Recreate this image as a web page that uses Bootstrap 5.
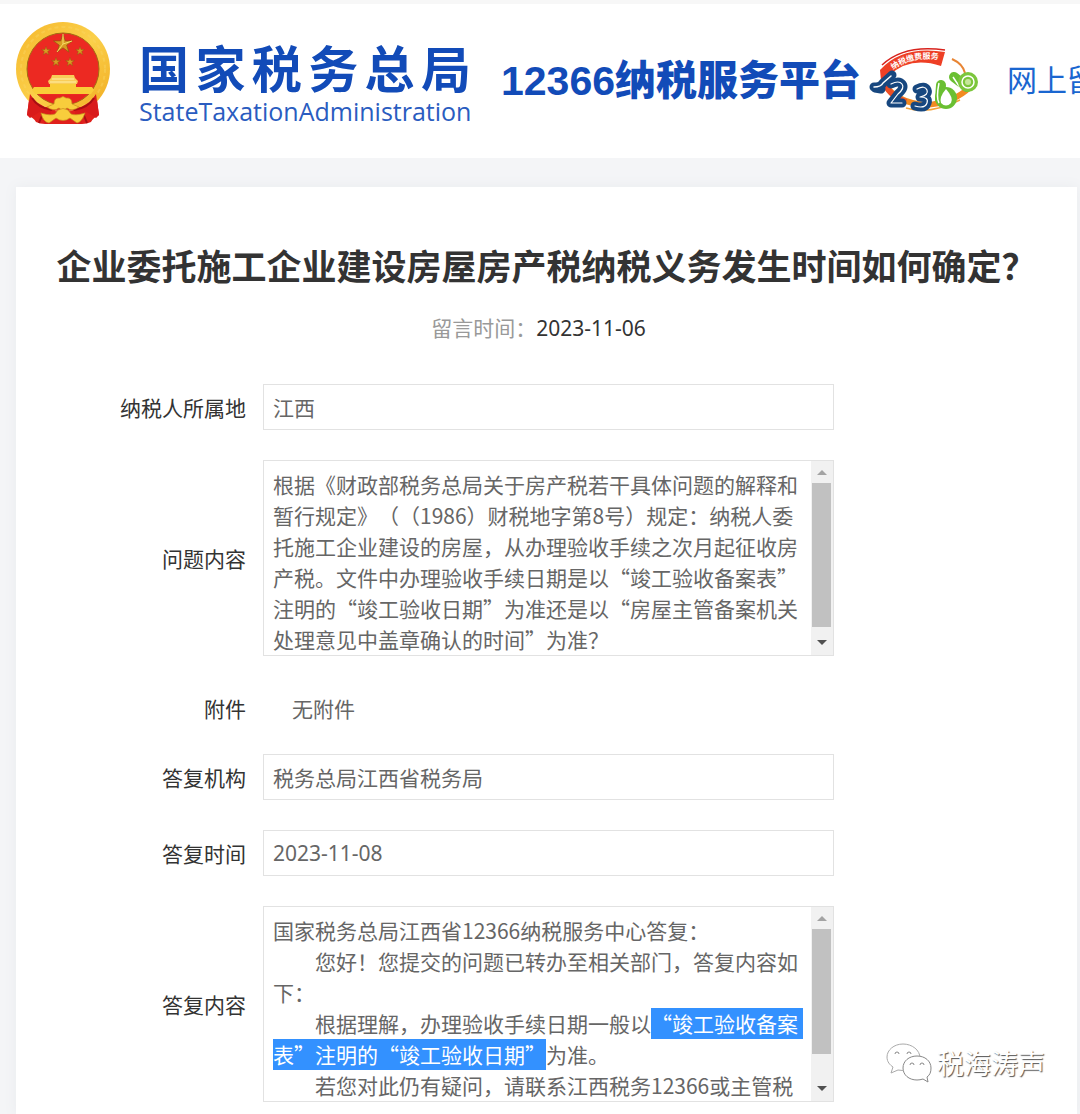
<!DOCTYPE html>
<html lang="zh-CN">
<head>
<meta charset="utf-8">
<meta name="viewport" content="width=device-width, initial-scale=1">
<title>12366纳税服务平台</title>
<link href="https://cdn.jsdelivr.net/npm/bootstrap@5.3.0/dist/css/bootstrap.min.css" rel="stylesheet">
<style>
  body {
    background: #f4f5f7;
    color: #333;
    font-family: "Noto Sans CJK SC", "Noto Sans", sans-serif;
    font-size: 21px;
    line-height: 30px;
    text-spacing-trim: space-all;
  }
  .site-header { border-top: 4px solid #f7f7f7; height: 158px; color: #124bb8; }
  .brand-emblem { margin: 18px 29px 0 16px; }
  .brand-name { width: 332px; margin-top: 31px; }
  .brand-cn { font-size: 50px; line-height: 62px; font-weight: 700; text-align-last: justify; }
  .brand-en { font-family: "Open Sans", "Noto Sans", sans-serif; font-size: 25px; line-height: 28px; color: #2a5cc0; }
  .platform { font-size: 41px; line-height: 48px; font-weight: 900; margin: 49px 0 0 30px; }
  .platform-num { font-family: "Liberation Sans", sans-serif; }
  .platform-logo { margin: 43px 0 0 7px; }
  .top-link { font-size: 30px; line-height: 40px; margin: 54px 0 0 27px; color: #1a66d0; }
  .sheet { margin: 29px 3px 0 16px; padding: 53px 16px 13px 0; box-shadow: 0 0 12px #e9ebee; }
  .sheet-title { font-size: 35px; line-height: 50px; padding-left: 16px; }
  .sheet-date { margin: 22px 0 41px; }
  .muted-label { color: #999; }
  .form-stack { gap: 30px; }
  .field-label { width: 230px; margin-right: 17px; flex: none; }
  .field-box { width: 571px; min-width: 0; }
  .field-box, .field-box .form-control { color: #666; }
  .field-box .form-control { font: inherit; border-radius: 0; border: 1px solid #e2e2e2; padding: 7px 9px; background: #fff; box-shadow: none; }
  .area-frame { border: 1px solid #e2e2e2; height: 196px; }
  .area-frame .form-control { border: 0; padding: 8px 0 0 9px; resize: none; overflow: hidden; height: 194px; line-height: 31px; }
  .latin, .field-box .latin { font-family: "Noto Sans", "Noto Sans CJK SC", sans-serif; }
  .form-control::selection { background: #3391ff; color: #fff; }
  .scroll-track { width: 22px; background: #f1f1f1; flex: none; }
  .scroll-thumb { width: 19px; background: #c1c1c1; margin-left: 1px; }
  .thumb-long { height: 144px; }
  .thumb-short { height: 125px; }
  .no-file { padding: 7px 0 1px 29px; }
  .no-file-label { padding-top: 7px; }
  .stamp { right: 32px; bottom: 30px; color: #fff; font-size: 27px; line-height: 44px; text-shadow: 1px 1px 1px #555; gap: 5px; }
</style>
</head>
<body class="d-flex flex-column min-vh-100 overflow-hidden">

<header class="site-header bg-white d-flex align-items-start text-nowrap overflow-hidden">
  <svg class="brand-emblem flex-shrink-0" width="94" height="103" viewBox="0 0 94 103" role="img" aria-label="国徽">
    <defs>
      <linearGradient id="gold" x1="0" y1="0" x2="1" y2="1"><stop offset="0" stop-color="#f5b72c"/><stop offset=".5" stop-color="#fbd04a"/><stop offset="1" stop-color="#f0a91e"/></linearGradient>
      <path id="star" d="M0-10 2.3-3.1H9.5L3.7 1.2 5.9 8.1 0 3.8-5.9 8.1-3.7 1.2-9.5-3.1H-2.3Z"/>
    </defs>
    <path d="M14 70 11 93q7 3 9 7 4 2 9 2h37q5 0 9-2 2-4 8-7l-3-23Z" fill="#e0201c"/>
    <circle cx="47" cy="47" r="47" fill="url(#gold)" clip-path="inset(0 0 9px 0)"/>
    <circle cx="47" cy="47" r="42" fill="none" stroke="#f9d766" stroke-width="2" stroke-dasharray="4 3" opacity=".4"/>
    <path d="M14 72q6 11 21 15l-1 15h-5l-4-13-11 7-3-3ZM80 72q-6 11-21 15l1 15h5l4-13 11 7 3-3Z" fill="#d91b1b"/>
    <path d="M16 76q6 10 20 12M78 76q-6 10-20 12M27 91l-4 10M67 91l4 10" fill="none" stroke="#a80f13" stroke-width="2"/>
    <circle cx="47" cy="47" r="36" fill="#ec2922" stroke="#a36b12" stroke-width="1"/>
    <use href="#star" transform="translate(47 22)" fill="#d99b22" stroke="#8c5a10" stroke-width=".7"/>
    <path d="M47 12v10l-6 8M47 22l9-3" stroke="#f7dc66" fill="none"/>
    <g fill="#d99b22" stroke="#8c5a10"><use href="#star" transform="translate(30 29) scale(.46)"/><use href="#star" transform="translate(64 29) scale(.46)"/><use href="#star" transform="translate(40 40) scale(.46)"/><use href="#star" transform="translate(54 40) scale(.46)"/></g>
    <path d="M36 53h22l1 3 3 3-1 3H33l-1-3 3-3Z" fill="#f9cd58"/>
    <path d="M36 57h22M34 60h26" stroke="#fff0a8" stroke-width="1"/>
    <path d="M34 62h26v3h16l2 3-3 4H19l-3-4 2-3h16Z" fill="#f9cd38"/>
    <path d="M24 73h46q-8 9-23 10-15-1-23-10Z" fill="#e7231f"/>
    <g fill="#f8cd3c" stroke="#c98a1c" stroke-width=".7"><path d="M38 82q0-7 6-6 3-3 6 0 6-1 6 6l7 3q-7 5-12 1-4 4-8 0-5 4-12-1Z"/><path d="M25 91q9 3 14 1l3-4q5-3 10 0l3 4q5 2 14-1-3 9-8 10l-7-5q-7 5-14 0l-7 5q-6-1-8-10Z"/></g>
  </svg>
  <div class="brand-name flex-shrink-0">
    <div class="brand-cn">国家税务总局</div>
    <div class="brand-en">StateTaxationAdministration</div>
  </div>
  <div class="platform flex-shrink-0"><span class="platform-num">12366</span>纳税服务平台</div>
  <svg class="platform-logo flex-shrink-0" width="112" height="68" viewBox="0 0 112 68" role="img" aria-label="12366">
    <defs><path id="ribbon" d="M25 23Q45 8 75 13"/></defs>
    <path d="M16 36Q28 56 58 58q28-2 44-18" fill="none" stroke="#f28a21" stroke-width="6"/>
    <path d="M16 34q4 14 22 21" fill="none" stroke="#ee4f25" stroke-width="6"/>
    <path d="M38 61q24 7 54-8" fill="none" stroke="#f3a33a" stroke-width="1.5"/>
    <path d="M84 12q11 5 13 14" fill="none" stroke="#e88534" stroke-width="2"/>
    <path d="M12 23Q34-2 77 5l-4 14Q42 9 22 28q-3 3-3 12l-5 4Z" fill="#ee3f25"/>
    <path d="M14 18Q36-3 77 3" fill="none" stroke="#d8231d" stroke-width="1.5"/>
    <text font-size="8" font-weight="700" fill="#fff"><textPath href="#ribbon">纳税缴费服务</textPath></text>
    <g fill="none" stroke-linecap="round" stroke-linejoin="round">
      <g stroke="#17477f" stroke-width="9"><path d="M6 40q7 0 9-4l9-8M13 42l-6-1"/></g>
      <path d="M6 40q7 0 9-4l8-7" stroke="#fff" stroke-width="1.5"/>
      <g stroke="#17477f" stroke-width="9"><path d="M23 37q8-4 11 0t-4 10l-7 9h11"/></g>
      <path d="M23 37q8-4 11 0t-4 10l-7 9h11" stroke="#fff" stroke-width="1.2"/>
      <g stroke="#17477f" stroke-width="9"><path d="M49 42q8-4 10 1t-7 7q9 0 7 6t-12 3"/></g>
      <path d="M49 42q8-4 10 1t-7 7q9 0 7 6t-12 3" stroke="#fff" stroke-width="1.2"/>
      <path d="m73 38-1 14M86 30l13 10" stroke="#6abf32" stroke-width="10"/>
    </g>
    <circle cx="78" cy="51" r="11" fill="#6abf32"/>
    <path d="M78 42q8 9 5 14-5 5-10 0-2-6 5-14Z" fill="#fff"/><path d="M71 36q-3 15 0 20M85 30l8 12" stroke="#fff" stroke-width="1.5" fill="none"/>
    <circle cx="100" cy="35" r="10" fill="#7cc63c"/><circle cx="100" cy="35" r="6" fill="none" stroke="#fff" stroke-width="1.5"/><circle cx="100" cy="35" r="3" fill="#c5e79b"/>
  </svg>
  <a class="top-link flex-shrink-0 text-decoration-none" href="#">网上留言</a>
</header>

<main class="sheet bg-white flex-grow-1 position-relative">
  <h1 class="sheet-title text-center fw-bold mb-0">企业委托施工企业建设房屋房产税纳税义务发生时间如何确定？</h1>
  <p class="sheet-date text-center"><span class="muted-label">留言时间：</span><span class="latin">2023-11-06</span></p>

  <form class="form-stack d-flex flex-column">
    <div class="d-flex align-items-center">
      <label class="field-label text-end" for="region">纳税人所属地</label>
      <div class="field-box"><input class="form-control" id="region" type="text" value="江西" readonly></div>
    </div>
    <div class="d-flex align-items-center">
      <label class="field-label text-end" for="question">问题内容</label>
      <div class="field-box area-frame d-flex">
        <textarea class="form-control" id="question" readonly>根据《财政部税务总局关于房产税若干具体问题的解释和暂行规定》（（1986）财税地字第8号）规定：纳税人委托施工企业建设的房屋，从办理验收手续之次月起征收房产税。文件中办理验收手续日期是以“竣工验收备案表”注明的“竣工验收日期”为准还是以“房屋主管备案机关处理意见中盖章确认的时间”为准？</textarea>
        <div class="scroll-track d-flex flex-column" aria-hidden="true">
          <svg width="22" height="22"><path d="M6 14h10l-5-5Z" fill="#a3a3a3"/></svg>
          <div class="scroll-thumb thumb-long"></div>
          <svg class="mt-auto" width="22" height="24"><path d="M6 9h10l-5 5Z" fill="#505050"/></svg>
        </div>
      </div>
    </div>
    <div class="d-flex">
      <div class="field-label no-file-label text-end">附件</div>
      <div class="field-box no-file">无附件</div>
    </div>
    <div class="d-flex align-items-center">
      <label class="field-label text-end" for="office">答复机构</label>
      <div class="field-box"><input class="form-control" id="office" type="text" value="税务总局江西省税务局" readonly></div>
    </div>
    <div class="d-flex align-items-center">
      <label class="field-label text-end" for="replied">答复时间</label>
      <div class="field-box"><input class="form-control latin" id="replied" type="text" value="2023-11-08" readonly></div>
    </div>
    <div class="d-flex align-items-center">
      <label class="field-label text-end" for="reply">答复内容</label>
      <div class="field-box area-frame d-flex">
        <textarea class="form-control" id="reply" readonly>国家税务总局江西省12366纳税服务中心答复：
　　您好！您提交的问题已转办至相关部门，答复内容如下：
　　根据理解，办理验收手续日期一般以“竣工验收备案表”注明的“竣工验收日期”为准。
　　若您对此仍有疑问，请联系江西税务12366或主管税务机关。</textarea>
        <div class="scroll-track d-flex flex-column" aria-hidden="true">
          <svg width="22" height="22"><path d="M6 14h10l-5-5Z" fill="#a3a3a3"/></svg>
          <div class="scroll-thumb thumb-short"></div>
          <svg class="mt-auto" width="22" height="24"><path d="M6 9h10l-5 5Z" fill="#505050"/></svg>
        </div>
      </div>
    </div>
  </form>

  <div class="stamp position-absolute d-flex align-items-center">
    <svg width="46" height="40" viewBox="0 0 46 40" fill="#fff" stroke="#888" stroke-width="1" aria-hidden="true">
      <path d="M17 1C8 1 1 7 1 14c0 5 3 8 6 10l-2 6 7-3q5 1 9 0c8-1 13-6 13-12C34 7 26 1 17 1Z" stroke="#aaa"/>
      <path d="M31 13c-8 0-14 5-14 12s6 12 14 12q3 0 6-1l5 3-1-5c3-2 4-5 4-9 0-7-6-12-14-12Z"/>
      <g fill="none"><path d="M9 11a2 2 0 1 1 4 0M21 11a2 2 0 1 1 4 0M24 22a2 2 0 1 1 4 0M34 22a2 2 0 1 1 4 0"/></g>
    </svg>
    <span>税海涛声</span>
  </div>
</main>

<script src="https://cdn.jsdelivr.net/npm/bootstrap@5.3.0/dist/js/bootstrap.bundle.min.js"></script>
<script>
  // Select the cited passage of the reply
  const reply = document.getElementById('reply');
  const passage = '“竣工验收备案表”注明的“竣工验收日期”';
  const start = reply.value.indexOf(passage);
  reply.focus({ preventScroll: true });
  reply.setSelectionRange(start, start + passage.length);
  reply.scrollTop = 0;
</script>
</body>
</html>
